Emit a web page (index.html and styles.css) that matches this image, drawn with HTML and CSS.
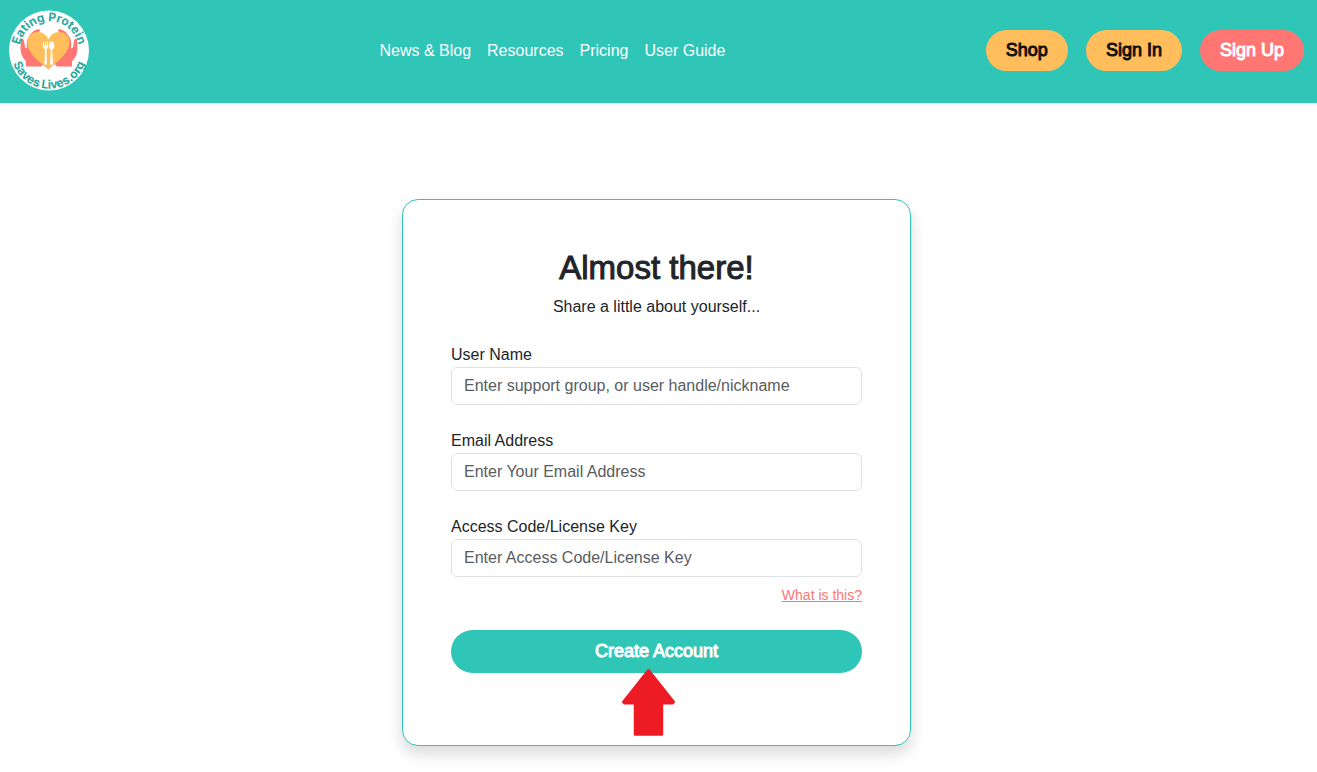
FILE: index.html
```html
<!DOCTYPE html>
<html lang="en">
<head>
    <meta charset="UTF-8">
    <meta name="viewport" content="width=device-width, initial-scale=1">
    <title>Create Account</title>
    <link rel="stylesheet" href="styles.css">
</head>
<body>

<header class="navbar">
    <a class="brand" href="#">
        <svg class="logo" viewBox="0 0 80 80" role="img" aria-label="Eating Protein Saves Lives.org">
            <defs>
                <path id="arc-top" d="M11.500 50 A30 30 0 1 1 68.500 50"/>
                <path id="arc-bottom" d="M5.200 25 A38 38 0 1 0 74.800 25"/>
            </defs>
            <circle cx="40" cy="40" r="40" fill="#fff"/>
            <!-- hands -->
            <g fill="#ff7673">
                <path d="M17 56 L17 51 Q11 45 11.500 36 L12 29 Q13.500 26.500 15 30 L16 37 L18 38 Q17 30 20 26 Q23 20.500 28 19 Q31 18 31 20 Q30 22 28 24 L33 29 L38 50 L32 56 Z"/>
                <path d="M63 56 L63 51 Q69 45 68.500 36 L68 29 Q66.500 26.500 65 30 L64 37 L62 38 Q63 30 60 26 Q57 20.500 52 19 Q49 18 49 20 Q50 22 52 24 L47 29 L42 50 L48 56 Z"/>
            </g>
            <path fill="#ffbe5b" d="M39.500 59.500 C34 53 18.500 45 18.500 32 C18.500 24 24 21.500 28.500 21.500 C34 21.500 38 25 39.500 29 C41 25 45 21.500 50.500 21.500 C56 21.500 60.500 25 60.500 32 C60.500 44 45 53 39.500 59.500 Z"/>
            <!-- fork and spoon -->
            <g fill="#fff">
                <path d="M34 31 H35 V35 H36 V31 H37 V35 H38 V31 H39 V36 Q39 38 37.500 38.500 L38 54 H35.500 L36 38.500 Q34 38 34 36 Z"/>
                <ellipse cx="42.500" cy="35" rx="2.800" ry="4"/>
                <path d="M42 37 H43 L44 54 H41 Z"/>
            </g>
            <text class="logo-text"><textPath href="#arc-top" startOffset="50%">Eating Protein</textPath></text>
            <text class="logo-text"><textPath href="#arc-bottom" startOffset="50%">Saves Lives.org</textPath></text>
        </svg>
    </a>
    <nav class="nav-links">
        <a href="#">News &amp; Blog</a>
        <a href="#">Resources</a>
        <a href="#">Pricing</a>
        <a href="#">User Guide</a>
    </nav>
    <div class="nav-buttons">
        <button class="btn btn-yellow" type="button">Shop</button>
        <button class="btn btn-yellow" type="button">Sign In</button>
        <button class="btn btn-coral" type="button">Sign Up</button>
    </div>
</header>

<main class="page">
    <form class="card">
        <h1>Almost there!</h1>
        <p class="subtitle">Share a little about yourself...</p>

        <div class="field">
            <label for="username">User Name</label>
            <input type="text" id="username" placeholder="Enter support group, or user handle/nickname">
        </div>
        <div class="field">
            <label for="email">Email Address</label>
            <input type="email" id="email" placeholder="Enter Your Email Address">
        </div>
        <div class="field">
            <label for="code">Access Code/License Key</label>
            <input type="text" id="code" placeholder="Enter Access Code/License Key">
            <a class="help-link" href="#">What is this?</a>
        </div>

        <div class="submit-row">
            <button class="btn btn-submit" type="submit">Create Account</button>
            <svg class="arrow" viewBox="0 0 54 68" aria-hidden="true">
                <path fill="#ed1c24" d="M26 0 H28 L54 33 V34 L52 36 H42 V67 L41 68 H13 L12 67 V36 H2 L0 34 V33 Z"/>
            </svg>
        </div>
    </form>
</main>

</body>
</html>
```
FILE: styles.css
```css
* {
    box-sizing: border-box;
}

body {
    margin: 0;
    background-color: #fff;
    color: #212529;
    font-family: "Liberation Sans", Arial, sans-serif;
    font-size: 16px;
    line-height: 24px;
}

.navbar {
    display: flex;
    justify-content: space-between;
    align-items: center;
    padding: 10px 13px 12px 9px;
    background-color: #2fc5b7;
    box-shadow: 0 2px 4px rgba(0, 0, 0, 0.08);
}

.brand {
    margin-right: 30px;
}

.logo {
    display: block;
    width: 80px;
    height: 81px;
    overflow: visible;
}

.logo-text {
    fill: #2aa89c;
    font-family: Inter, sans-serif;
    font-size: 12px;
    font-weight: 700;
    text-anchor: middle;
}

.nav-links {
    display: flex;
}

.nav-links a {
    padding: 8px;
    color: #fff;
    text-decoration: none;
}

.nav-buttons {
    display: flex;
    gap: 18px;
}

.btn {
    padding: 7px 20px;
    border: none;
    border-radius: 24px;
    font-family: inherit;
    font-size: 18px;
    line-height: 27px;
    -webkit-text-stroke: 1px currentColor;
    cursor: pointer;
}

.btn-yellow {
    background-color: #ffbe5b;
    color: #111;
}

.btn-coral {
    background-color: #ff7673;
    color: #fff;
}

.page {
    display: flex;
    justify-content: center;
    padding: 96px 16px 24px 12px;
}

.card {
    width: 100%;
    max-width: 509px;
    padding: 48px 48px 72px;
    border: 1px solid #2fc5b7;
    border-radius: 16px;
    background-color: #fff;
    box-shadow: 0 8px 16px rgba(0, 0, 0, 0.15);
}

h1 {
    margin: 0 0 8px;
    font-size: 33px;
    font-weight: 400;
    line-height: 39px;
    text-align: center;
    -webkit-text-stroke: 1px currentColor;
}

.subtitle {
    margin: 0 0 24px;
    text-align: center;
}

.field {
    display: flex;
    flex-direction: column;
    margin-bottom: 24px;
}

.field input {
    width: 100%;
    height: 38px;
    padding: 6px 12px;
    border: 1px solid #dee2e6;
    border-radius: 6px;
    background-color: #fff;
    color: #212529;
    font: inherit;
}

.field input::placeholder {
    color: #595c5f;
    opacity: 1;
}

.help-link {
    align-self: flex-end;
    margin-top: 8px;
    color: #ff7673;
    font-size: 14px;
    line-height: 21px;
}

.submit-row {
    position: relative;
}

.btn-submit {
    display: block;
    width: 100%;
    padding: 8px 20px;
    background-color: #2fc5b7;
    color: #fff;
}

/* points at the submit button */
.arrow {
    position: absolute;
    top: 39px;
    left: calc(50% - 35px);
    width: 53px;
    height: 67px;
}
```
